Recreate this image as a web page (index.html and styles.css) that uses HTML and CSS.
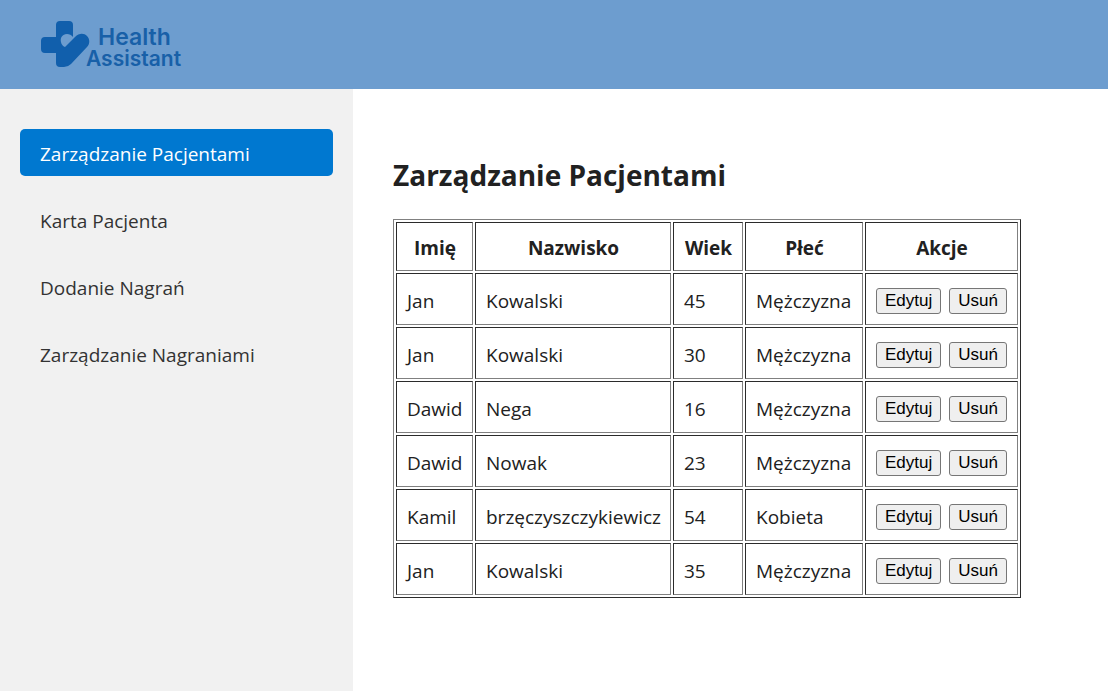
FILE: index.html
```html
<!DOCTYPE html>
<html lang="pl">
<head>
<meta charset="utf-8">
<meta name="viewport" content="width=device-width, initial-scale=1">
<title>Health Assistant</title>
<link rel="stylesheet" href="styles.css">
</head>
<body>
<header class="topbar">
  <svg class="logo" viewBox="0 0 144 48" role="img" aria-label="Health Assistant">
    <path class="logo-mark" d="M18 0H28Q32 0 32 4V16C29 12 22 12 20 17C19 21 21 25 24 26L34 16C38 12 43 12 46 15C49 18 49 23 46 26L30 43Q27 46 23 46H19Q15 46 15 42V32H4Q0 32 0 28V20Q0 16 4 16H15V4Q15 0 19 0Z"/>
    <text class="logo-text logo-first" x="57" y="24">Health</text>
    <text class="logo-text logo-second" x="45" y="45">Assistant</text>
  </svg>
</header>
<div class="layout">
  <nav class="sidebar">
    <a class="nav-link active" href="#pacjenci" aria-current="page">Zarządzanie Pacjentami</a>
    <a class="nav-link" href="#karta">Karta Pacjenta</a>
    <a class="nav-link" href="#dodanie">Dodanie Nagrań</a>
    <a class="nav-link" href="#nagrania">Zarządzanie Nagraniami</a>
  </nav>
  <main class="content">
    <h2 class="title">Zarządzanie Pacjentami</h2>
    <table class="patients">
      <colgroup><col class="col-first"><col class="col-last"><col class="col-age"><col class="col-sex"><col class="col-actions"></colgroup>
      <thead>
        <tr><th>Imię</th><th>Nazwisko</th><th>Wiek</th><th>Płeć</th><th>Akcje</th></tr>
      </thead>
      <tbody>
        <tr><td>Jan</td><td>Kowalski</td><td>45</td><td>Mężczyzna</td><td><div class="actions"><button type="button">Edytuj</button><button type="button">Usuń</button></div></td></tr>
        <tr><td>Jan</td><td>Kowalski</td><td>30</td><td>Mężczyzna</td><td><div class="actions"><button type="button">Edytuj</button><button type="button">Usuń</button></div></td></tr>
        <tr><td>Dawid</td><td>Nega</td><td>16</td><td>Mężczyzna</td><td><div class="actions"><button type="button">Edytuj</button><button type="button">Usuń</button></div></td></tr>
        <tr><td>Dawid</td><td>Nowak</td><td>23</td><td>Mężczyzna</td><td><div class="actions"><button type="button">Edytuj</button><button type="button">Usuń</button></div></td></tr>
        <tr><td>Kamil</td><td>brzęczyszczykiewicz</td><td>54</td><td>Kobieta</td><td><div class="actions"><button type="button">Edytuj</button><button type="button">Usuń</button></div></td></tr>
        <tr><td>Jan</td><td>Kowalski</td><td>35</td><td>Mężczyzna</td><td><div class="actions"><button type="button">Edytuj</button><button type="button">Usuń</button></div></td></tr>
      </tbody>
    </table>
  </main>
</div>
</body>
</html>
```
FILE: styles.css
```css
* { box-sizing: border-box; }

body {
  margin: 0;
  min-height: 100vh;
  display: flex;
  flex-direction: column;
  background: #fff;
  color: #212121;
  font: 19px/27px "Segoe UI", "Open Sans", "Noto Sans", sans-serif;
}

.topbar {
  display: flex;
  padding: 21px 41px 20px;
  background: #6d9dcf;
}

.logo { width: 144px; height: 48px; overflow: visible; }
.logo-mark { fill: #115fac; }
.logo-text { fill: #1860a8; font: 600 21px Inter, sans-serif; }
.logo-first { font-size: 23px; }

.layout { display: flex; flex: 1; }

.sidebar {
  flex: 0 0 353px;
  display: flex;
  flex-direction: column;
  gap: 20px;
  padding: 40px 20px;
  background: #f1f1f1;
}

.nav-link {
  padding: 12px 20px 8px;
  border-radius: 5px;
  color: #333;
  text-decoration: none;
}

.nav-link.active { background: #0078d0; color: #fff; }

.content { flex: 1; padding: 66px 40px 40px; }

.title {
  margin: 0 0 24px;
  font-size: 28px;
  line-height: 40px;
  font-weight: 700;
}

.patients {
  border: 1px solid;
  border-color: #808080 #2b2b2b #2b2b2b #808080;
  border-spacing: 2px;
}

.patients th,
.patients td {
  height: 52px;
  padding: 12px 9px 8px 10px;
  border: 1px solid;
  border-color: #2b2b2b #808080 #808080 #2b2b2b;
  text-align: left;
  white-space: nowrap;
}

.patients th { height: 49px; text-align: center; }

.col-first { width: 77px; }
.col-last { width: 196px; }
.col-age { width: 70px; }
.col-sex { width: 118px; }
.col-actions { width: 153px; }

.actions { display: flex; gap: 8px; }

.actions button {
  padding: 2px 8px;
  border: 1px solid #767676;
  border-radius: 3px;
  background: #efefef;
  color: #000;
  font: 17px/20px "Liberation Sans", Arial, sans-serif;
}
```
